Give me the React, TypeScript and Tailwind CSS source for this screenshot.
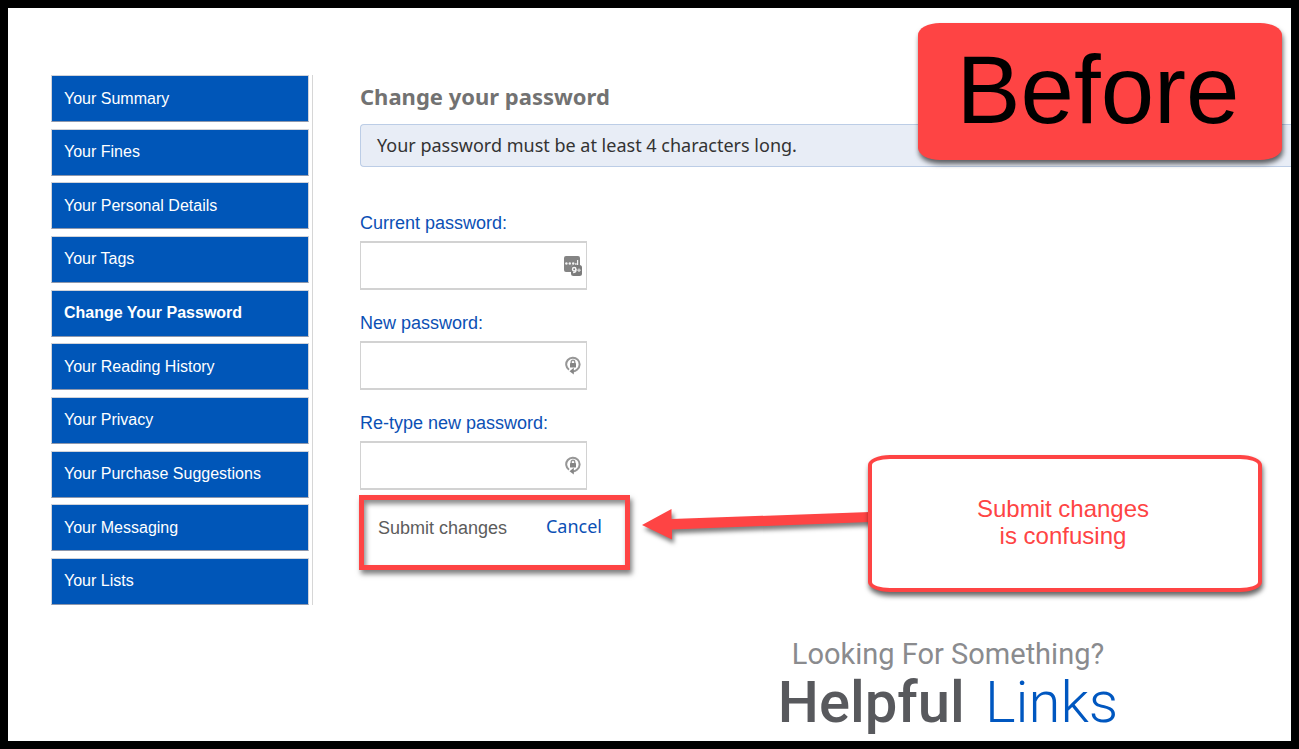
import type { ReactNode } from "react";

const navItems = [
  "Your Summary",
  "Your Fines",
  "Your Personal Details",
  "Your Tags",
  "Change Your Password",
  "Your Reading History",
  "Your Privacy",
  "Your Purchase Suggestions",
  "Your Messaging",
  "Your Lists",
];

const ACTIVE = "Change Your Password";

function SavedLoginsIcon() {
  return (
    <svg width="18" height="20" viewBox="0 0 18 20" aria-hidden="true">
      <path
        fill="#848484"
        d="M2 0h12a2 2 0 0 1 2 2v7h-6a3 3 0 0 0-3 3v4H2a2 2 0 0 1-2-2V2a2 2 0 0 1 2-2Z"
      />
      <rect x="7" y="9" width="11" height="11" rx="2.5" fill="#7c7c7c" />
      <g fill="#f4f4f4">
        <circle cx="2.4" cy="7.5" r="1.2" />
        <circle cx="5.8" cy="7.5" r="1.2" />
        <circle cx="9.2" cy="7.5" r="1.2" />
        <rect x="13" y="4" width="1.2" height="5" />
        <rect x="11.3" y="7" width="1.2" height="2" />
      </g>
      <circle cx="10.2" cy="13.2" r="1.7" fill="none" stroke="#f4f4f4" strokeWidth="1.5" />
      <path d="M11.9 13v1.5q0 2-2.8 2" fill="none" stroke="#f4f4f4" strokeWidth="1.3" />
      <path d="M13.3 14.2h3.4M15 12.5v3.4" stroke="#d4d4d4" strokeWidth="1.4" />
    </svg>
  );
}

function GeneratePasswordIcon() {
  return (
    <svg width="16" height="19" viewBox="0 0 16 19" aria-hidden="true">
      <path
        d="M4 13.800A6.700 6.700 0 1 1 12.200 13.500Q10.400 15.200 8 15.400"
        fill="none"
        stroke="#969696"
        strokeWidth="2"
      />
      <path d="M8.800 11.800v6.800l-4.300-3.300Z" fill="#858585" />
      <path d="M6.200 7.500V6a1.800 1.800 0 0 1 3.600 0v1.500" fill="none" stroke="#969696" strokeWidth="1.400" />
      <rect x="5" y="7" width="6" height="4.600" rx="0.600" fill="#858585" />
    </svg>
  );
}

function PasswordField({ id, label, icon }: { id: string; label: string; icon: ReactNode }) {
  return (
    <div>
      <label htmlFor={id} className="mb-1 block text-lg leading-[27px] text-[#0b50b5]">
        {label}
      </label>
      <div className="relative w-[227px]">
        <input
          id={id}
          type="password"
          className="block h-[49px] w-full border border-y-2 border-[#d2d2d2] bg-white pr-9 pl-3 outline-none"
        />
        <span className="pointer-events-none absolute inset-y-0 right-1 flex w-5 items-center justify-center">
          {icon}
        </span>
      </div>
    </div>
  );
}

export default function App() {
  return (
    <div className="relative min-h-screen overflow-hidden border-8 border-black bg-white pt-[67px] pl-[43px] font-['Liberation_Sans',Arial,sans-serif]">
      <div className="flex items-start">
        <nav className="shrink-0 border-r border-[#d6d6d6] pr-[3px]">
          <ul className="flex h-[530px] w-[258px] flex-col justify-between">
            {navItems.map((item) => (
              <li key={item}>
                <a
                  href="#"
                  className={`flex h-[47px] items-center border border-[#d0d3da] border-b-[#8d97ac] bg-[#0056b8] px-3 text-base text-white ${
                    item === ACTIVE ? "font-bold" : "font-normal"
                  }`}
                >
                  {item}
                </a>
              </li>
            ))}
          </ul>
        </nav>

        <main className="ml-[47px] min-w-0 flex-1">
          <h1 className="pt-[3px] font-['Noto_Sans',sans-serif] text-[22px] leading-9 font-bold text-[#727272]">
            Change your password
          </h1>
          <p className="mt-[10px] h-[43px] rounded-l border border-r-0 border-[#bccde6] bg-[#e8edf6] px-4 font-['Noto_Sans',sans-serif] text-lg leading-10 text-[#333]">
            Your password must be at least 4 characters long.
          </p>

          <form className="mt-[43px]" onSubmit={(e) => e.preventDefault()}>
            <div className="flex flex-col gap-5">
              <PasswordField id="current" label="Current password:" icon={<SavedLoginsIcon />} />
              <PasswordField id="new" label="New password:" icon={<GeneratePasswordIcon />} />
              <PasswordField id="retype" label="Re-type new password:" icon={<GeneratePasswordIcon />} />
            </div>
            <div className="mt-[5px] -ml-px flex h-[75px] w-[271px] items-start justify-between border-5 border-[#fe4444] pt-3 pr-[23px] pl-[14px] shadow-[2px_4px_5px_rgba(0,0,0,0.5),inset_2px_4px_5px_rgba(0,0,0,0.45)]">
              <button type="submit" className="pt-[2px] text-lg leading-7 text-[#5c5c5c]">
                Submit changes
              </button>
              <a href="#" className="font-['Noto_Sans',sans-serif] text-lg leading-7 text-[#0b50b5]">
                Cancel
              </a>
            </div>
          </form>
        </main>
      </div>

      <footer className="mt-[31px] ml-[554px] font-['Roboto',sans-serif]">
        <p className="text-center text-[29px] leading-9 text-[#8a8b8e]">Looking For Something?</p>
        <h2 className="flex justify-center gap-5 text-[58px] leading-[60px] text-[#58595d]">
          <span className="font-medium">Helpful</span>
          <span className="font-light text-[#0057c0]">Links</span>
        </h2>
      </footer>

      <div className="absolute top-[15px] left-[910px] flex h-[137px] w-[364px] items-center justify-center rounded-[22px/12px] bg-[#fe4444] pr-1 pb-1 text-8xl text-black shadow-[1px_4px_5px_rgba(0,0,0,0.6)]">
        Before
      </div>

      <svg
        className="absolute top-[492px] left-[630px] drop-shadow-[2px_4px_2px_rgba(0,0,0,0.5)]"
        width="234"
        height="48"
        viewBox="0 0 234 48"
        aria-hidden="true"
      >
        <path d="M4 25 33.500 9v10L232 12v10L34 29.500v10Z" fill="#fe4444" />
      </svg>

      <div className="absolute top-[447px] left-[860px] flex h-[137px] w-[394px] items-center justify-center rounded-[22px/10px] border-4 border-[#fe4444] bg-white pr-1 pb-1 text-center text-2xl leading-[27px] text-[#fe4444] shadow-[1px_4px_5px_rgba(0,0,0,0.6)]">
        <p>
          Submit changes
          <br />
          is confusing
        </p>
      </div>
    </div>
  );
}
